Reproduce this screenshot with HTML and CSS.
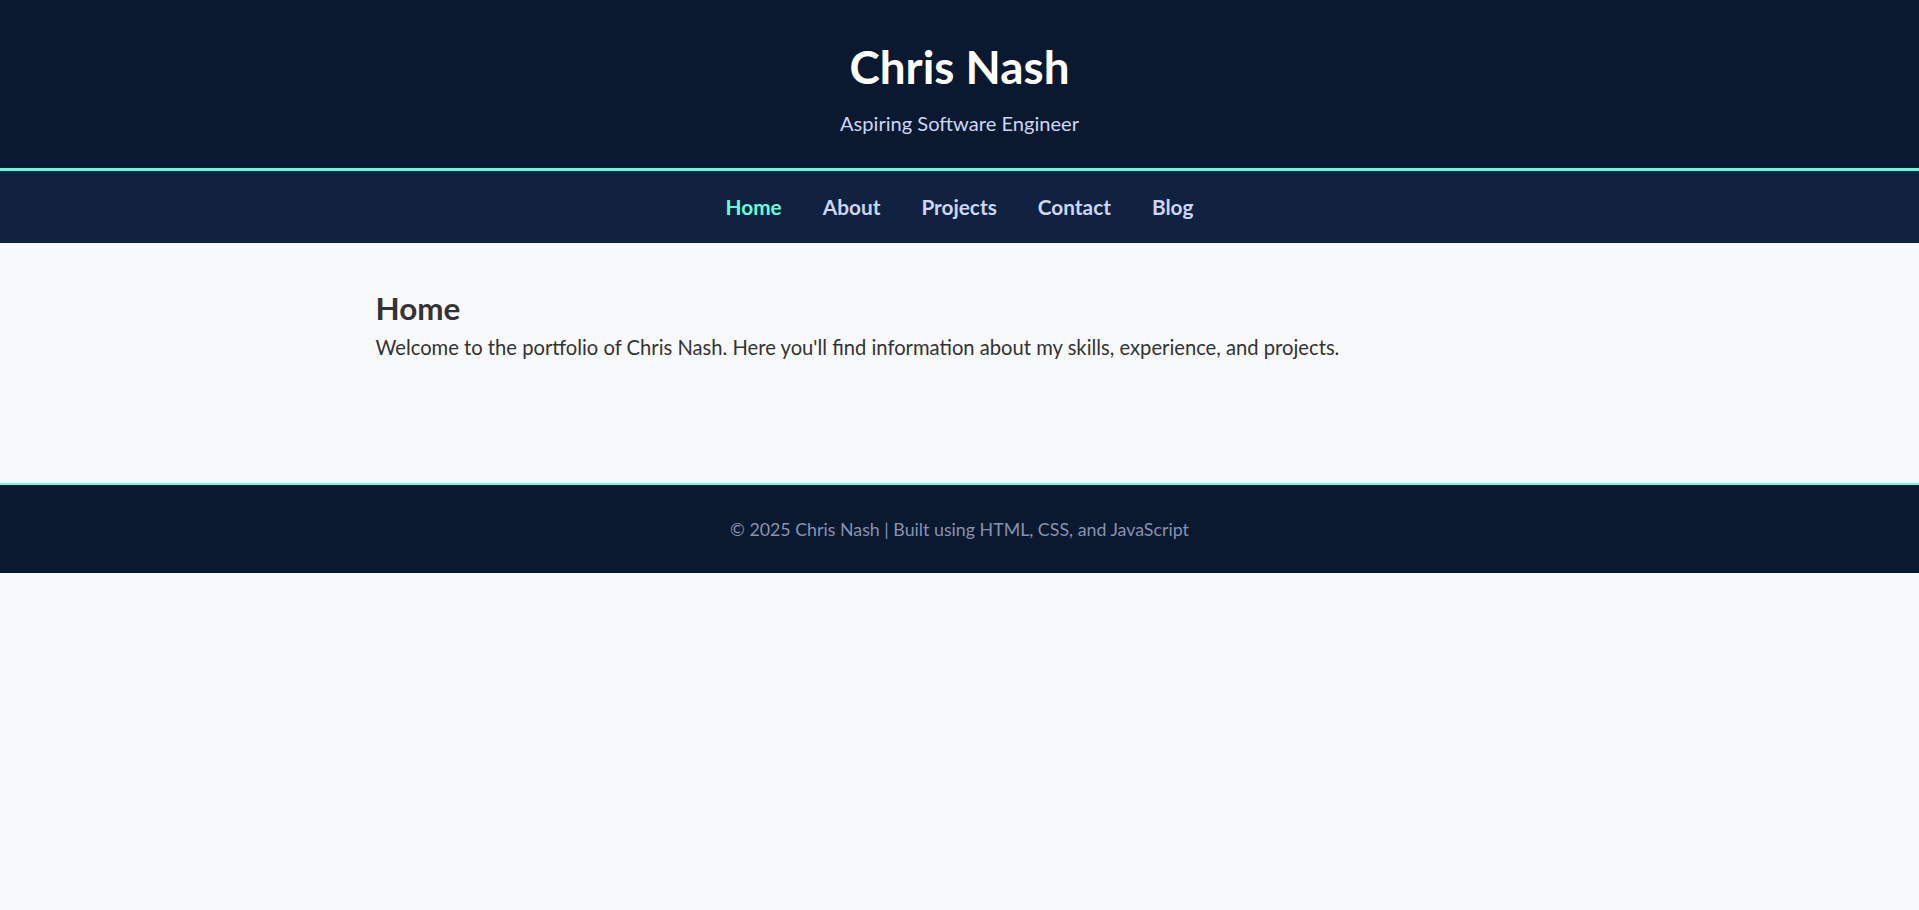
FILE: index.html
```html
<!DOCTYPE html>
<html lang="en">
<head>
<meta charset="utf-8">
<title>Chris Nash | Portfolio</title>
<link rel="stylesheet" href="styles.css">
</head>
<body>
<header class="site-header">
  <h1 class="site-title">Chris Nash</h1>
  <p class="site-tagline">Aspiring Software Engineer</p>
</header>
<nav class="site-nav">
  <a class="nav-link active" href="#home">Home</a>
  <a class="nav-link" href="#about">About</a>
  <a class="nav-link" href="#projects">Projects</a>
  <a class="nav-link" href="#contact">Contact</a>
  <a class="nav-link" href="#blog">Blog</a>
</nav>
<main class="content">
  <section class="section" id="home">
    <h2 class="section-title">Home</h2>
    <p class="section-text">Welcome to the portfolio of Chris Nash. Here you'll find information about my skills, experience, and projects.</p>
  </section>
</main>
<footer class="site-footer">
  <p class="footer-text">&copy; 2025 Chris Nash | Built using HTML, CSS, and JavaScript</p>
</footer>
</body>
</html>
```
FILE: styles.css
```css
* { box-sizing: border-box; }

body {
  margin: 0;
  font-family: Lato, "Open Sans", sans-serif;
  background: #f8f9fa;
  color: #333333;
}

.site-header {
  background: #0a192f;
  text-align: center;
  padding: 40px 0 31px;
  border-bottom: 3px solid #64ffda;
}

.site-title {
  margin: 0 0 15px;
  font-size: 45.8px;
  line-height: 54px;
  font-weight: 700;
  color: #ffffff;
}

.site-tagline {
  margin: 0;
  font-size: 20.1px;
  line-height: 28px;
  color: #ccd6f6;
}

.site-nav {
  background: #112240;
  height: 72px;
  display: flex;
  justify-content: center;
  align-items: center;
  gap: 41px;
}

.nav-link {
  color: #ccd6f6;
  text-decoration: none;
  font-weight: 700;
  font-size: 20.8px;
  line-height: 28px;
}

.nav-link.active { color: #64ffda; }

.content {
  max-width: 1200px;
  margin: 0 auto;
  padding: 47px 16px 121px;
}

.section-title {
  margin: 0 0 7px;
  font-size: 31.4px;
  line-height: 36px;
  font-weight: 700;
  color: #333333;
}

.section-text {
  margin: 0;
  font-size: 20.2px;
  line-height: 29px;
}

.site-footer {
  background: #0a192f;
  border-top: 2px solid #64ffda;
  text-align: center;
  padding: 30px 0;
}

.footer-text {
  margin: 0;
  font-size: 17.8px;
  line-height: 28px;
  color: #8892b0;
}
```
